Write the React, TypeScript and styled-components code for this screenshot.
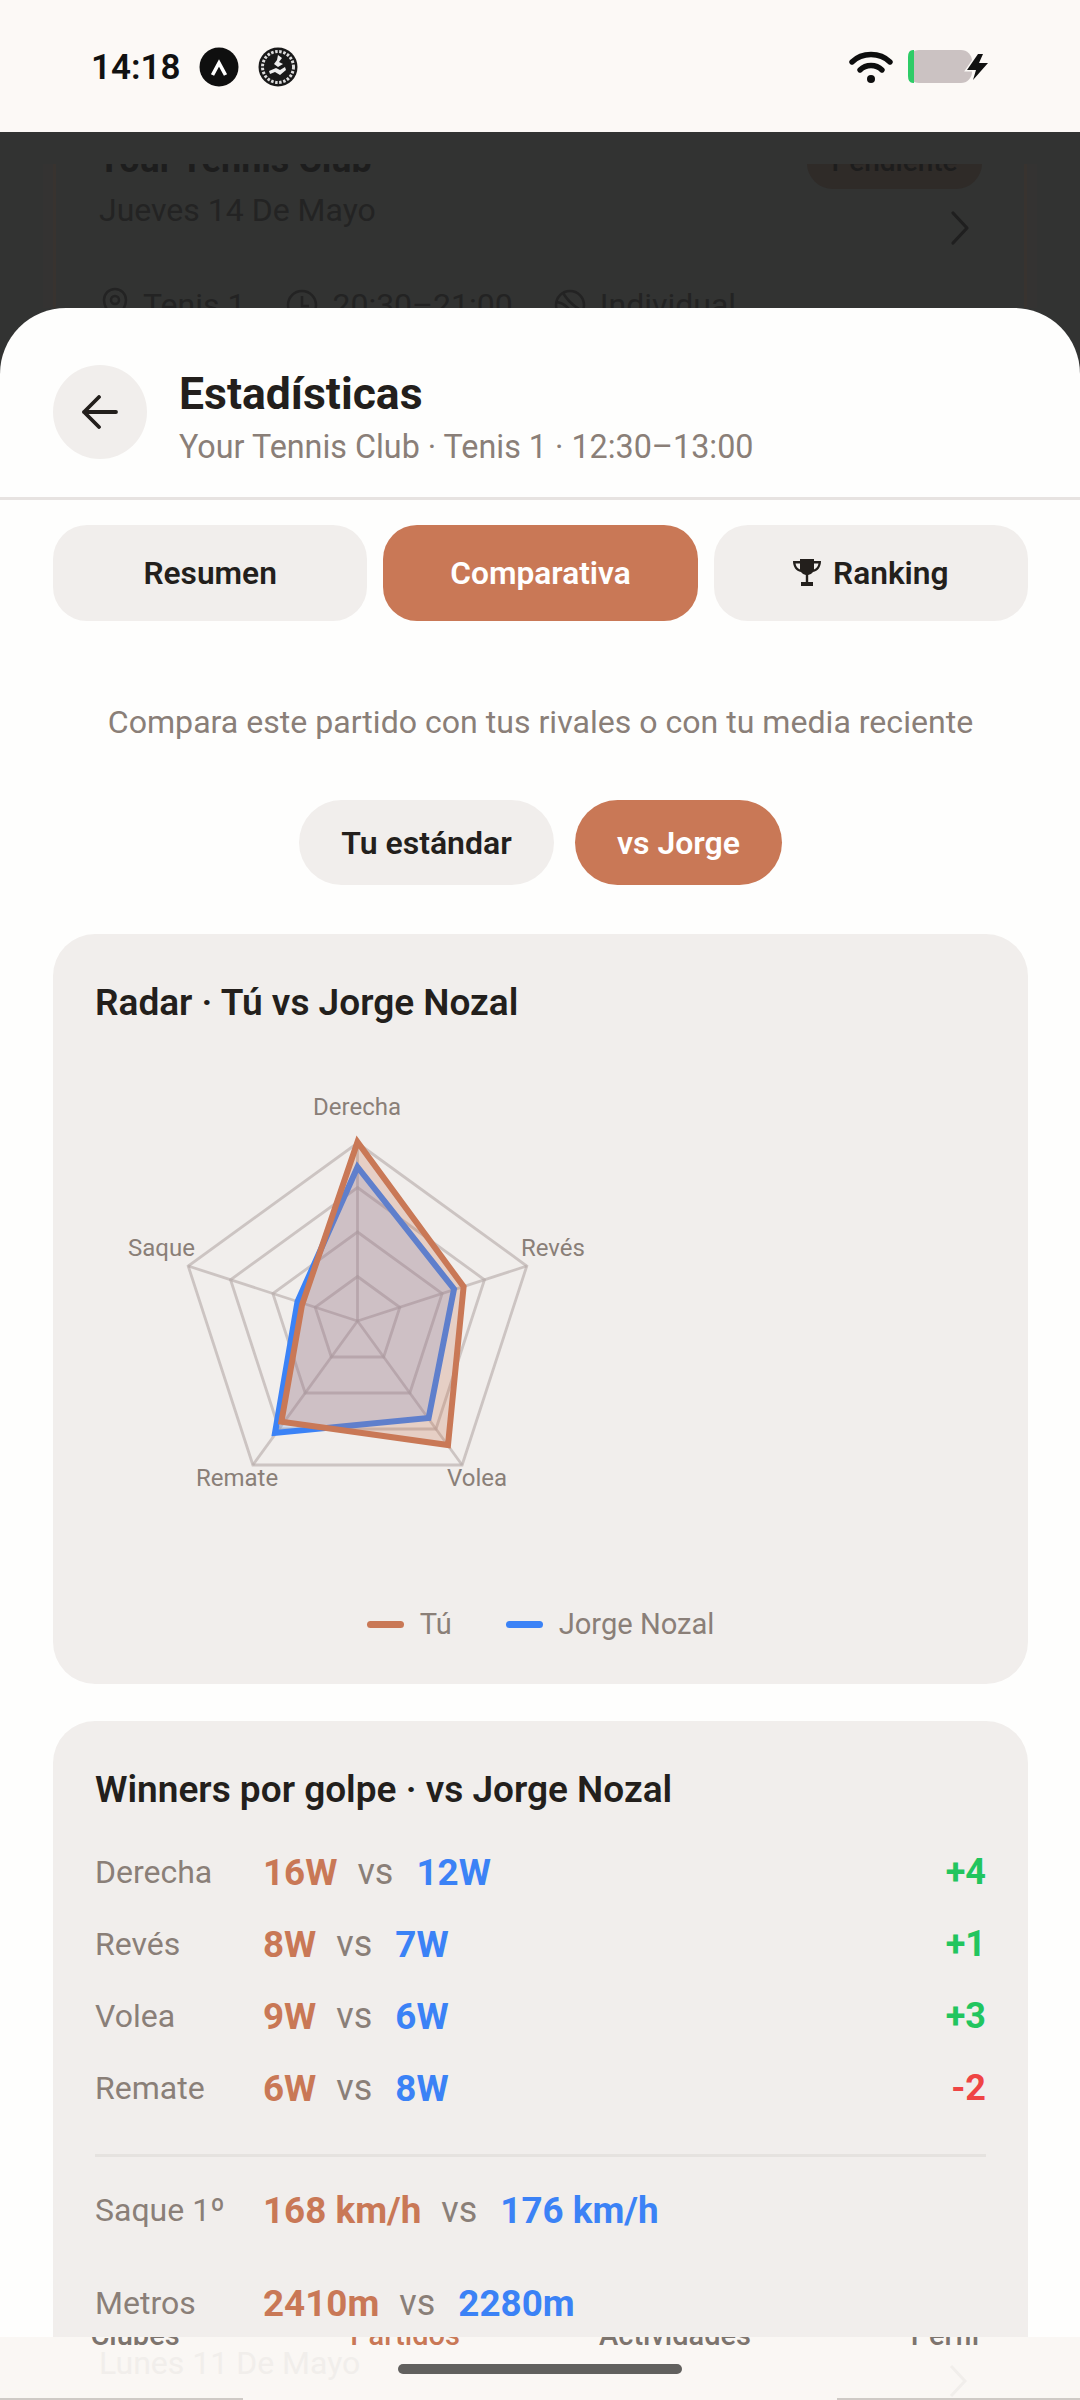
import React from "react";
import styled, { createGlobalStyle } from "styled-components";

const Global = createGlobalStyle`
  html, body { margin: 0; padding: 0; background: #fefefd; }
  * { box-sizing: border-box; }
`;

const INK = "#231f1c";
const MUTED = "#8a7f78";
const ACCENT = "#c97856";
const BLUE = "#3b82f6";
const CARD = "#f1eeec";

const Screen = styled.div`
  width: 1080px;
  height: 2400px;
  overflow: hidden;
  display: flex;
  flex-direction: column;
  font-family: Roboto, "Liberation Sans", sans-serif;
  color: ${INK};
  background: #323332;
`;

const StatusBar = styled.header`
  flex: 0 0 132px;
  background: #fcf9f6;
  display: flex;
  align-items: center;
  justify-content: space-between;
  padding: 2px 90px 0 91px;
`;
const StatusGroup = styled.div<{ $gap: number }>`
  display: flex;
  align-items: center;
  gap: ${(p) => p.$gap}px;
`;
const Clock = styled.span`
  font-size: 35px;
  font-weight: 600;
  color: #111;
  width: 89px;
`;

const Main = styled.div`
  flex: 1;
  min-height: 0;
  display: flex;
  flex-direction: column;
  background: #323332;
`;

const Backdrop = styled.div`
  flex: 0 0 176px;
  padding-top: 32px;
`;
const BackClip = styled.div`
  height: 144px;
  overflow: hidden;
  padding: 0 53px;
`;
const BackCard = styled.div`
  margin-top: -26px;
  height: 260px;
  padding: 0 45px;
  border-left: 3px solid #38332f;
  border-right: 3px solid #38332f;
  box-shadow: -10px 0 0 #343332, 10px 0 0 #343332;
`;
const BackTop = styled.div`
  display: flex;
  justify-content: space-between;
  align-items: flex-start;
  height: 58px;
  padding-right: 0;
`;
const BackTitle = styled.div`
  font-size: 36px;
  font-weight: 700;
  line-height: 44px;
  margin-left: -3px;
  color: #1d1d1d;
`;
const BackChip = styled.div`
  width: 175px;
  height: 51px;
  margin-right: -3px;
  background: #2f2b28;
  border-radius: 0 0 26px 26px;
  font-size: 28px;
  font-weight: 500;
  line-height: 36px;
  padding-top: 6px;
  text-align: center;
  color: #1d1d1d;
`;
const BackDateRow = styled.div`
  display: flex;
  justify-content: space-between;
  align-items: flex-start;
  height: 90px;
  padding-right: 9px;
`;
const BackDate = styled.div`
  font-size: 32px;
  line-height: 38px;
  margin-top: -5px;
  margin-left: -2px;
  color: #232323;
`;
const BackChevron = styled.svg`
  margin-top: 14px;
`;
const BackMeta = styled.div`
  display: flex;
  align-items: center;
  color: #232323;
  font-size: 32px;
  line-height: 38px;
`;
const BackMetaItem = styled.span`
  display: flex;
  align-items: center;
  gap: 14px;
  margin-right: 41px;
`;

const Sheet = styled.section`
  flex: 1;
  min-height: 0;
  overflow: hidden;
  background: #fefefd;
  border-radius: 66px 66px 0 0;
`;
const SheetHeader = styled.div`
  height: 192px;
  padding: 57px 53px 0;
  display: flex;
  align-items: flex-start;
  gap: 33px;
  border-bottom: 3px solid #e7e3e1;
`;
const BackButton = styled.button`
  width: 94px;
  height: 94px;
  border: 0;
  border-radius: 50%;
  background: ${CARD};
  display: flex;
  align-items: center;
  justify-content: center;
  padding: 0;
`;
const HeaderText = styled.div`
  display: flex;
  flex-direction: column;
  margin-top: 3px;
  margin-left: -1px;
`;
const Title = styled.h1`
  margin: 0;
  font-size: 44.5px;
  font-weight: 700;
  line-height: 52px;
  color: ${INK};
`;
const Subtitle = styled.p`
  margin: 7px 0 0;
  font-size: 32.3px;
  line-height: 40px;
  color: ${MUTED};
`;

const Body = styled.div`
  padding: 25px 52px 0 53px;
`;
const Tabs = styled.div`
  display: grid;
  grid-template-columns: repeat(3, 1fr);
  gap: 16px;
`;
const Tab = styled.button<{ $active?: boolean }>`
  height: 96px;
  border: 0;
  border-radius: 34px;
  background: ${(p) => (p.$active ? ACCENT : CARD)};
  color: ${(p) => (p.$active ? "#fff" : INK)};
  font: 600 31.7px Roboto, sans-serif;
  display: flex;
  align-items: center;
  justify-content: center;
  gap: 12px;
  padding: 0;
`;
const Lead = styled.p`
  margin: 81px 0 0;
  text-align: center;
  font-size: 32.1px;
  line-height: 40px;
  color: ${MUTED};
`;
const Pills = styled.div`
  margin-top: 58px;
  display: flex;
  justify-content: center;
  gap: 21px;
`;
const Pill = styled.button<{ $active?: boolean; $w: number }>`
  width: ${(p) => p.$w}px;
  height: 85px;
  border: 0;
  border-radius: 43px;
  background: ${(p) => (p.$active ? ACCENT : CARD)};
  color: ${(p) => (p.$active ? "#fff" : INK)};
  font: 600 32px Roboto, sans-serif;
  padding: 0;
`;
const Card = styled.article<{ $mt: number }>`
  margin-top: ${(p) => p.$mt}px;
  background: ${CARD};
  border-radius: 42px;
  padding: 42px;
`;
const CardTitle = styled.h2`
  margin: 0;
  font-size: 37px;
  font-weight: 600;
  line-height: 54px;
  color: ${INK};
`;
const Chart = styled.svg`
  display: block;
  margin-top: 20px;
`;
const AxisLabel = styled.text`
  font: 400 24px Roboto, sans-serif;
  fill: ${MUTED};
`;
const Legend = styled.div`
  margin-top: 74px;
  margin-bottom: -2px;
  display: flex;
  justify-content: center;
  gap: 54px;
  font-size: 29.1px;
  line-height: 40px;
  color: ${MUTED};
`;
const LegendItem = styled.span`
  display: flex;
  align-items: center;
  gap: 16px;
`;
const LegendLine = styled.i<{ $c: string }>`
  display: block;
  width: 37px;
  height: 7px;
  border-radius: 4px;
  background: ${(p) => p.$c};
`;

const Rows = styled.div`
  margin-top: 19px;
`;
const Row = styled.div<{ $mt?: number }>`
  height: 72px;
  margin-top: ${(p) => p.$mt ?? 0}px;
  display: flex;
  align-items: center;
`;
const RowLabel = styled.span`
  flex: 0 0 168px;
  font-size: 32px;
  color: ${MUTED};
`;
const Versus = styled.span`
  margin: 0 23px 0 20px;
  font-size: 36px;
  color: ${MUTED};
`;
const Val = styled.strong<{ $c: string }>`
  font-size: 36.8px;
  font-weight: 700;
  color: ${(p) => p.$c};
`;
const Delta = styled.strong<{ $c: string }>`
  margin-left: auto;
  font-size: 36px;
  font-weight: 700;
  color: ${(p) => p.$c};
`;
const Rule = styled.hr`
  margin: 30px 0 17px;
  height: 3px;
  border: 0;
  background: #e5e2df;
`;

const Nav = styled.nav`
  flex: 0 0 63px;
  position: relative;
  overflow: hidden;
  background: #faf7f4;
  &::before, &::after {
    content: "";
    position: absolute;
    bottom: 0;
    height: 2px;
    width: 243px;
    background: #cfcac6;
  }
  &::before { left: 0; }
  &::after { right: 0; }
`;
const NavLabels = styled.div`
  margin-top: -20px;
  display: grid;
  grid-template-columns: repeat(4, 1fr);
  text-align: center;
`;
const NavLabel = styled.span<{ $active?: boolean }>`
  font-size: 29px;
  font-weight: 500;
  line-height: 36px;
  color: ${(p) => (p.$active ? ACCENT : "#7d746e")};
`;
const GhostText = styled.span`
  position: absolute;
  left: 99px;
  top: 7px;
  font-size: 32px;
  line-height: 38px;
  color: #f1eeeb;
`;
const GhostChevron = styled.svg`
  position: absolute;
  left: 948px;
  top: 26px;
`;
const HomeBar = styled.span`
  position: absolute;
  left: 398px;
  top: 27px;
  width: 284px;
  height: 10px;
  border-radius: 5px;
  background: #61605e;
`;

const R = 178;
const CX = 262.5;
const CY = 271;
const AXES = [0, 72, 144, 216, 288].map((d) => (d * Math.PI) / 180);
const vertex = (a: number, f: number) => [CX + R * f * Math.sin(a), CY - R * f * Math.cos(a)];
const ring = (f: number) => AXES.map((a) => vertex(a, f).join(",")).join(" ");
const TU = "262.5,92 368.6,236.7 353,395 186.4,371.7 207,255";
const JN = "262.5,117 359,239 333.6,368 180,383 202.5,251.7";

function Radar() {
  return (
    <Chart width="520" height="480" viewBox="0 0 520 480">
      <g fill="none" stroke="#b5aaa8" strokeOpacity="0.62" strokeWidth="2.8">
        {[0.25, 0.5, 0.75, 1].map((f) => (
          <polygon key={f} points={ring(f)} />
        ))}
        {AXES.map((a) => {
          const [x, y] = vertex(a, 1);
          return <line key={a} x1={CX} y1={CY} x2={x} y2={y} />;
        })}
      </g>
      <polygon points={JN} fill={BLUE} fillOpacity="0.18" stroke={BLUE} strokeWidth="6" />
      <polygon points={TU} fill={ACCENT} fillOpacity="0.26" stroke={ACCENT} strokeWidth="6" />
      <AxisLabel x="262" y="65" textAnchor="middle">Derecha</AxisLabel>
      <AxisLabel x="33" y="206">Saque</AxisLabel>
      <AxisLabel x="426" y="206">Revés</AxisLabel>
      <AxisLabel x="101" y="436">Remate</AxisLabel>
      <AxisLabel x="352" y="436">Volea</AxisLabel>
    </Chart>
  );
}

const ROWS = [
  { l: "Derecha", a: "16W", b: "12W", d: "+4", c: "#22c55e" },
  { l: "Revés", a: "8W", b: "7W", d: "+1", c: "#22c55e" },
  { l: "Volea", a: "9W", b: "6W", d: "+3", c: "#22c55e" },
  { l: "Remate", a: "6W", b: "8W", d: "-2", c: "#ef4444" },
];

export default function App() {
  return (
    <Screen>
      <Global />
      <StatusBar>
        <StatusGroup $gap={19}>
          <Clock>14:18</Clock>
          <svg width="40" height="40" viewBox="0 0 40 40">
            <circle cx="20" cy="20" r="19.5" fill="#0f0f0f" />
            <path d="M13.5 28 L20 16 L26.5 28" fill="none" stroke="#fff" strokeWidth="3.6" />
          </svg>
          <svg width="40" height="40" viewBox="0 0 40 40">
            <circle cx="20" cy="20" r="19.5" fill="#191919" />
            <circle cx="20" cy="20" r="15.5" fill="none" stroke="#ddd" strokeWidth="3" strokeDasharray="2.5 1.6" />
            <circle cx="20" cy="20" r="11" fill="#191919" />
            <path d="M20 8 l4 3 -3 4 4 2 -5 3 -4-3 3-4z M11 24 l7-3 4 2 5-3 1 3 -6 5 -5-3 -5 2z" fill="#eee" />
          </svg>
        </StatusGroup>
        <StatusGroup $gap={15}>
          <svg width="44" height="34" viewBox="0 0 44 34">
            <g fill="none" stroke="#0e0e0e" strokeWidth="5.4" strokeLinecap="round">
              <path d="M3 12 C13 2 31 2 41 12" />
              <path d="M11 20 C17 14 27 14 33 20" />
            </g>
            <circle cx="22" cy="29" r="4" fill="#0e0e0e" />
          </svg>
          <svg width="82" height="36" viewBox="0 0 82 36">
            <rect x="0" y="1" width="64" height="33" rx="11" fill="#cbc2c2" />
            <path d="M11 1 H5 Q0 1 0 8 V27 Q0 34 5 34 H6 V1z" fill="#2ecc67" />
            <path d="M70 5 L59 21 H68 L65 31 L80 14 H71 L75 5z" fill="#111" stroke="#fcf9f6" strokeWidth="3" paintOrder="stroke" />
          </svg>
        </StatusGroup>
      </StatusBar>

      <Main>
        <Backdrop>
          <BackClip>
            <BackCard>
              <BackTop>
                <BackTitle>Your Tennis Club</BackTitle>
                <BackChip>Pendiente</BackChip>
              </BackTop>
              <BackDateRow>
                <BackDate>Jueves 14 De Mayo</BackDate>
                <BackChevron width="20" height="36" viewBox="0 0 20 36" fill="none" stroke="#1f1f1f" strokeWidth="3.2" strokeLinecap="round" strokeLinejoin="round">
                  <path d="M3 3 L17 18 L3 33" />
                </BackChevron>
              </BackDateRow>
              <BackMeta>
                <BackMetaItem>
                  <svg width="28" height="36" viewBox="0 0 28 36" fill="none" stroke="#232323" strokeWidth="2.5">
                    <path d="M14 34 C8 26 3 20 3 13 A11 11 0 0 1 25 13 C25 20 20 26 14 34z" />
                    <circle cx="14" cy="13" r="4" />
                  </svg>
                  Tenis 1
                </BackMetaItem>
                <BackMetaItem>
                  <svg width="32" height="32" viewBox="0 0 32 32" fill="none" stroke="#232323" strokeWidth="2.5">
                    <circle cx="16" cy="16" r="14" />
                    <path d="M16 7 V17 H23" />
                  </svg>
                  20:30–21:00
                </BackMetaItem>
                <BackMetaItem>
                  <svg width="32" height="32" viewBox="0 0 32 32" fill="none" stroke="#232323" strokeWidth="2.5">
                    <circle cx="16" cy="16" r="14" />
                    <path d="M9 4 C14 12 20 18 29 22 M3 13 C10 14 17 20 20 29" />
                  </svg>
                  Individual
                </BackMetaItem>
              </BackMeta>
            </BackCard>
          </BackClip>
        </Backdrop>

        <Sheet>
          <SheetHeader>
            <BackButton aria-label="Volver">
              <svg width="36" height="34" viewBox="0 0 36 34" fill="none" stroke={INK} strokeWidth="3.8" strokeLinecap="round" strokeLinejoin="round">
                <path d="M34 17 H2 M17 2 L2 17 L17 32" />
              </svg>
            </BackButton>
            <HeaderText>
              <Title>Estadísticas</Title>
              <Subtitle>Your Tennis Club · Tenis 1 · 12:30–13:00</Subtitle>
            </HeaderText>
          </SheetHeader>
          <Body>
            <Tabs>
              <Tab>Resumen</Tab>
              <Tab $active>Comparativa</Tab>
              <Tab>
                <svg width="28" height="28" viewBox="0 0 28 28" fill={INK}>
                  <path d="M7 0 H21 V2 H28 C28 8 25 12 20 13 C19 14.5 17 15.6 15.2 16 V23 H20 V27 H8 V23 H12.8 V16 C11 15.6 9 14.5 8 13 C3 12 0 8 0 2 H7z M2.5 4.5 C3 7.5 4.6 9.6 7 10.5 V4.5z M21 4.5 V10.5 C23.4 9.6 25 7.5 25.5 4.5z" />
                </svg>
                Ranking
              </Tab>
            </Tabs>
            <Lead>Compara este partido con tus rivales o con tu media reciente</Lead>
            <Pills>
              <Pill $w={255}>Tu estándar</Pill>
              <Pill $w={207} $active>vs Jorge</Pill>
            </Pills>

            <Card $mt={49}>
              <CardTitle>Radar · Tú vs Jorge Nozal</CardTitle>
              <Radar />
              <Legend>
                <LegendItem><LegendLine $c={ACCENT} />Tú</LegendItem>
                <LegendItem><LegendLine $c={BLUE} />Jorge Nozal</LegendItem>
              </Legend>
            </Card>

            <Card $mt={37}>
              <CardTitle>Winners por golpe · vs Jorge Nozal</CardTitle>
              <Rows>
                {ROWS.map((r) => (
                  <Row key={r.l}>
                    <RowLabel>{r.l}</RowLabel>
                    <Val $c={ACCENT}>{r.a}</Val>
                    <Versus>vs</Versus>
                    <Val $c={BLUE}>{r.b}</Val>
                    <Delta $c={r.c}>{r.d}</Delta>
                  </Row>
                ))}
              </Rows>
              <Rule />
              <Row>
                <RowLabel>Saque 1º</RowLabel>
                <Val $c={ACCENT}>168 km/h</Val>
                <Versus>vs</Versus>
                <Val $c={BLUE}>176 km/h</Val>
              </Row>
              <Row $mt={21}>
                <RowLabel>Metros</RowLabel>
                <Val $c={ACCENT}>2410m</Val>
                <Versus>vs</Versus>
                <Val $c={BLUE}>2280m</Val>
              </Row>
            </Card>
          </Body>
        </Sheet>

        <Nav>
          <NavLabels>
            <NavLabel>Clubes</NavLabel>
            <NavLabel $active>Partidos</NavLabel>
            <NavLabel>Actividades</NavLabel>
            <NavLabel>Perfil</NavLabel>
          </NavLabels>
          <GhostText>Lunes 11 De Mayo</GhostText>
          <GhostChevron width="20" height="36" viewBox="0 0 20 36" fill="none" stroke="#f1eeeb" strokeWidth="3">
            <path d="M3 3 L17 18 L3 33" />
          </GhostChevron>
          <HomeBar />
        </Nav>
      </Main>
    </Screen>
  );
}
